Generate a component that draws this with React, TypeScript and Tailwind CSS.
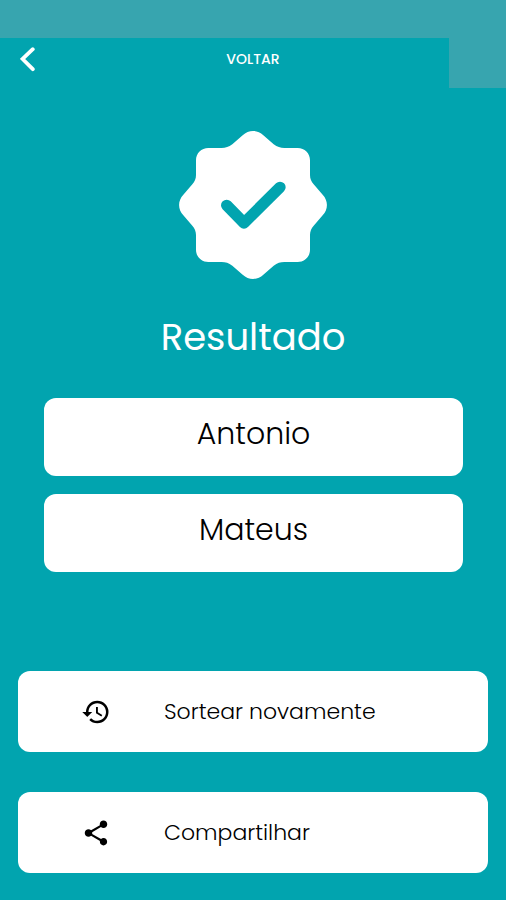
import type { ReactNode } from 'react';
import { MdHistory, MdShare } from 'react-icons/md';

const winners = ['Antonio', 'Mateus'];

function BackIcon() {
  return (
    <svg viewBox="0 0 16 26" className="h-[26px] w-4" fill="none" aria-hidden="true">
      <path
        d="M12.8 3.2 2.6 13l10.2 10.2"
        stroke="white"
        strokeWidth="3.8"
        strokeLinecap="round"
      />
    </svg>
  );
}

function VerifiedBadge() {
  return (
    <svg viewBox="-222 -222 444 444" className="size-[148px]" aria-hidden="true">
      <path
        fill="white"
        d="M-31-209C-13-226 13-226 31-209L62-182C73-174 82-171 94-171H134C155-171 171-155 171-134V-90C171-79 175-70 182-62L209-31C226-13 226 13 209 31L182 62C175 70 171 79 171 90V134C171 155 155 171 134 171H94C82 171 73 174 62 182L31 209C13 226-13 226-31 209L-62 182C-73 174-82 171-94 171H-134C-155 171-171 155-171 134V90C-171 79-175 70-182 62L-209 31C-226 13-226-13-209-31L-182-62C-175-70-171-79-171-90V-134C-171-155-155-171-134-171H-94C-82-171-73-174-62-182Z"
      />
      <path
        d="M-79 1-27 54 81-53"
        fill="none"
        stroke="#01a4af"
        strokeWidth="34"
        strokeLinecap="round"
        strokeLinejoin="round"
      />
    </svg>
  );
}

function ActionButton({ icon, children }: { icon: ReactNode; children: ReactNode }) {
  return (
    <button
      type="button"
      className="flex h-[81px] w-full items-center gap-[53px] rounded-xl bg-white pl-[63px] text-left text-[22px] font-light text-black"
    >
      {icon}
      {children}
    </button>
  );
}

export default function App() {
  return (
    <div className="flex min-h-screen flex-col bg-[#01a4af] font-['Poppins','Inter',sans-serif]">
      <div className="h-[38px] bg-[#37a5af]" />
      <header className="grid grid-cols-[57px_1fr_57px]">
        <button type="button" aria-label="Voltar" className="flex h-[42px] items-center pl-5">
          <BackIcon />
        </button>
        <span className="text-center text-sm leading-[42px] font-medium text-white">VOLTAR</span>
        <div className="h-[50px] bg-[#37a5af]" />
      </header>

      <main className="flex flex-1 flex-col items-center pt-[43px]">
        <VerifiedBadge />
        <h1 className="mt-8 text-[37px] leading-[52px] font-normal text-white">Resultado</h1>

        {/* Nomes sorteados */}
        <ul className="mt-[35px] w-full space-y-[18px] pr-[43px] pl-11">
          {winners.map((name) => (
            <li
              key={name}
              className="flex h-[78px] items-center justify-center rounded-xl bg-white pb-2 text-[30px] font-light text-black"
            >
              {name}
            </li>
          ))}
        </ul>

        {/* Ações */}
        <div className="mt-auto w-full space-y-10 px-[18px] pt-10 pb-[27px]">
          <ActionButton icon={<MdHistory className="size-[30px]" />}>Sortear novamente</ActionButton>
          <ActionButton icon={<MdShare className="size-[30px]" />}>Compartilhar</ActionButton>
        </div>
      </main>
    </div>
  );
}
